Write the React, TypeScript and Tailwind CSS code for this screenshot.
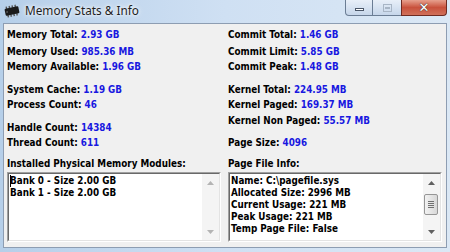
import React from "react";

type Stat = { label: string; value: string; mt: string };

const leftStats: Stat[] = [
  { label: "Memory Total:", value: "2.93 GB", mt: "mt-[4px]" },
  { label: "Memory Used:", value: "985.36 MB", mt: "mt-[4px]" },
  { label: "Memory Available:", value: "1.96 GB", mt: "mt-[2px]" },
  { label: "System Cache:", value: "1.19 GB", mt: "mt-[10px]" },
  { label: "Process Count:", value: "46", mt: "mt-[2px]" },
  { label: "Handle Count:", value: "14384", mt: "mt-[10px]" },
  { label: "Thread Count:", value: "611", mt: "mt-[2px]" },
];

const rightStats: Stat[] = [
  { label: "Commit Total:", value: "1.46 GB", mt: "mt-[4px]" },
  { label: "Commit Limit:", value: "5.85 GB", mt: "mt-[4px]" },
  { label: "Commit Peak:", value: "1.48 GB", mt: "mt-[2px]" },
  { label: "Kernel Total:", value: "224.95 MB", mt: "mt-[10px]" },
  { label: "Kernel Paged:", value: "169.37 MB", mt: "mt-[2px]" },
  { label: "Kernel Non Paged:", value: "55.57 MB", mt: "mt-[3px]" },
  { label: "Page Size:", value: "4096", mt: "mt-[9px]" },
];

const modules = ["Bank 0 - Size 2.00 GB", "Bank 1 - Size 2.00 GB"];

const pageFile = [
  "Name: C:\\pagefile.sys",
  "Allocated Size: 2996 MB",
  "Current Usage: 221 MB",
  "Peak Usage: 221 MB",
  "Temp Page File: False",
];

function ChipIcon() {
  return (
    <svg width="16" height="14" viewBox="0 0 16 14">
      <g transform="rotate(-12 8 7)">
        {[2, 5, 8, 11].map((x) => (
          <rect key={"t" + x} x={x + 0.5} y="1.5" width="1.4" height="2.5" fill="#555" />
        ))}
        {[2, 5, 8, 11].map((x) => (
          <rect key={"b" + x} x={x + 0.5} y="10" width="1.4" height="2.5" fill="#555" />
        ))}
        <rect x="1" y="3.5" width="14" height="7" rx="1" fill="#1b1b1b" />
        <circle cx="3" cy="7" r="1" fill="#555" />
      </g>
    </svg>
  );
}

function Arrow({ up, dim }: { up?: boolean; dim?: boolean }) {
  return (
    <svg width="7" height="4" viewBox="0 0 7 4">
      <path d={up ? "M0 4 L3.5 0 L7 4 Z" : "M0 0 L3.5 4 L7 0 Z"} fill={dim ? "#b4b4b4" : "#606060"} />
    </svg>
  );
}

function ScrollBar({ thumb }: { thumb?: boolean }) {
  return (
    <div className="w-[17px] h-full flex flex-col bg-[#f4f4f4] shrink-0">
      <div className="h-[17px] flex items-center justify-center">
        <Arrow up dim={!thumb} />
      </div>
      <div className="flex-1 relative">
        {thumb && (
          <div className="absolute left-[1px] top-[3px] w-[14px] h-[21px] rounded-[2px] border border-[#969696] bg-gradient-to-r from-[#f2f2f2] to-[#d8d8d8] flex flex-col items-center justify-center gap-[1px]">
            <div className="w-[6px] h-px bg-[#707070]" />
            <div className="w-[6px] h-px bg-[#707070]" />
            <div className="w-[6px] h-px bg-[#707070]" />
            <div className="w-[6px] h-px bg-[#707070]" />
          </div>
        )}
      </div>
      <div className="h-[17px] flex items-center justify-center">
        <Arrow dim={!thumb} />
      </div>
    </div>
  );
}

function ListBox({ lines, thumb, caret }: { lines: string[]; thumb?: boolean; caret?: boolean }) {
  return (
    <div className="h-[70px] border border-t-[#a0a0a0] border-l-[#a0a0a0] border-r-white border-b-white">
      <div className="h-full flex border border-t-[#696969] border-l-[#696969] border-r-[#e3e3e3] border-b-[#e3e3e3] bg-white">
        <div className="flex-1 pl-[1px] pt-[1px] overflow-hidden">
          {lines.map((l, i) => (
            <div key={i} className="h-[12px] leading-[12px] whitespace-pre relative">
              {caret && i === 0 && <span className="absolute left-0 top-0 w-px h-[12px] bg-black" />}
              {l}
            </div>
          ))}
        </div>
        <ScrollBar thumb={thumb} />
      </div>
    </div>
  );
}

function StatColumn({ stats, title, lines, thumb, caret }: { stats: Stat[]; title: string; lines: string[]; thumb?: boolean; caret?: boolean }) {
  return (
    <div className="flex flex-col">
      {stats.map((s) => (
        <div key={s.label} className={`${s.mt} h-[13px] leading-[13px] whitespace-nowrap`}>
          <span className="text-black">{s.label} </span>
          <span className="text-[#1818e0]">{s.value}</span>
        </div>
      ))}
      <div className="mt-[8px] h-[13px] leading-[13px]">{title}</div>
      <div className="mt-[2px]">
        <ListBox lines={lines} thumb={thumb} caret={caret} />
      </div>
    </div>
  );
}

export default function App() {
  return (
    <div className="w-[450px] h-[252px] flex flex-col bg-gradient-to-r from-[#b6cfe9] via-[#cfe0f3] to-[#dbe8f5] overflow-hidden">
      {/* title bar */}
      <div className="h-[23px] flex items-start justify-between shrink-0">
        <div className="flex items-center h-[22px] pl-[4px]">
          <ChipIcon />
          <span className="ml-[5px] text-[11.8px] text-[#1e1e1e] [font-family:'Noto_Sans',sans-serif] [text-shadow:0_0_6px_#fff,0_0_3px_#fff]">
            Memory Stats &amp; Info
          </span>
        </div>
        <div className="flex mr-[3px] h-[16px]">
          <div className="w-[28px] h-[16px] border border-[#6b7d94] border-t-0 rounded-bl-[4px] bg-gradient-to-b from-[#e8eff8] to-[#c6d6ea] flex items-center justify-center">
            <div className="w-[9px] h-[3px] bg-white border border-[#4a5668] mt-[3px]" />
          </div>
          <div className="w-[28px] h-[16px] border-b border-[#6b7d94] bg-gradient-to-b from-[#e8eff8] to-[#c6d6ea] flex items-center justify-center">
            <div className="w-[9px] h-[8px] border border-[#a8b5c5] flex items-center justify-center">
              <div className="w-[5px] h-[2px] border border-[#a8b5c5]" />
            </div>
          </div>
          <div className="w-[46px] h-[16px] border border-[#6e2b22] border-t-0 rounded-br-[4px] bg-gradient-to-b from-[#e6a08e] via-[#c8513c] to-[#d0705a] flex items-center justify-center">
            <span className="text-white font-bold text-[13px] leading-none [font-family:'DejaVu_Sans',sans-serif] [text-shadow:0_0_1px_#333,0_0_1px_#333]">
              ✕
            </span>
          </div>
        </div>
      </div>
      {/* client area */}
      <div className="mx-[3px] mb-[4px] h-[225px] border border-[#8d9db2] bg-[#f0f0f0] pl-[3px] pr-[3px] text-[9.8px] font-bold [font-family:'DejaVu_Sans_Condensed','DejaVu_Sans',sans-serif]">
        <div className="grid grid-cols-[214px_214px] gap-x-[7px]">
          <StatColumn stats={leftStats} title="Installed Physical Memory Modules:" lines={modules} caret />
          <StatColumn stats={rightStats} title="Page File Info:" lines={pageFile} thumb />
        </div>
      </div>
    </div>
  );
}
